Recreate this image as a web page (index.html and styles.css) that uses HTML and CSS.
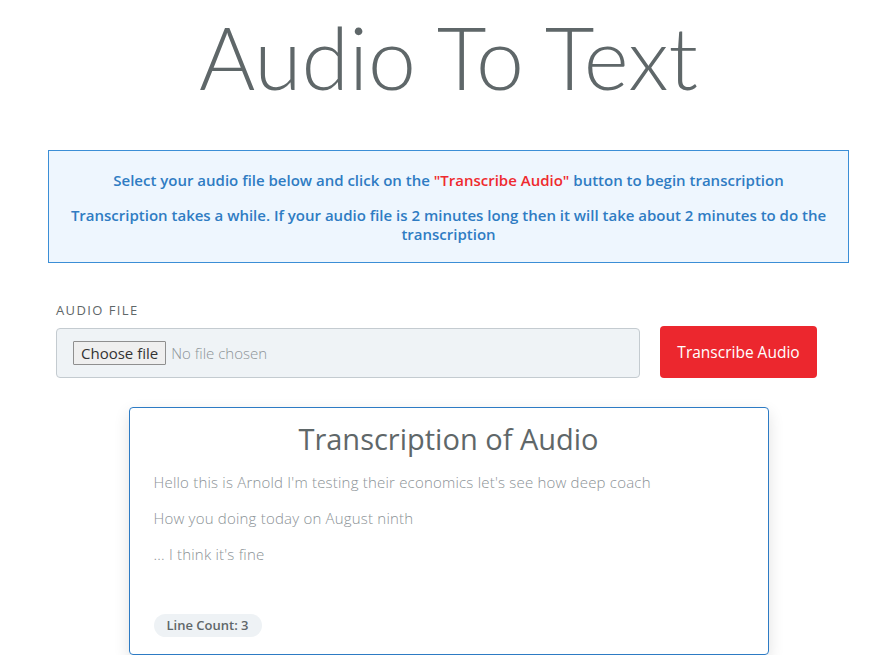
FILE: index.html
```html
<!DOCTYPE html>
<html>
<head>
<meta charset="utf-8">
<link rel="stylesheet" href="styles.css">
</head>
<body>
<div class="page">
  <h1 class="title">Audio To Text</h1>
  <div class="info">
    <p>Select your audio file below and click on the <span class="hl">"Transcribe Audio"</span> button to begin transcription</p>
    <p>Transcription takes a while. If your audio file is 2 minutes long then it will take about 2 minutes to do the transcription</p>
  </div>
  <div class="form">
    <div class="field">
      <label class="label">AUDIO FILE</label>
      <div class="filebox">
        <span class="choose">Choose file</span>
        <span class="nofile">No file chosen</span>
      </div>
    </div>
    <button class="btn">Transcribe Audio</button>
  </div>
  <div class="card">
    <h2 class="card-title">Transcription of Audio</h2>
    <p class="line">Hello this is Arnold I'm testing their economics let's see how deep coach</p>
    <p class="line">How you doing today on August ninth</p>
    <p class="line">... I think it's fine</p>
    <span class="badge">Line Count: 3</span>
  </div>
</div>
</body>
</html>
```
FILE: styles.css
```css
* { box-sizing: border-box; }
html, body { margin: 0; padding: 0; background: #fff; }
body { font-family: "Open Sans", Lato, sans-serif; color: #5f6769; }
.page { width: 801px; margin: 0 0 0 48px; padding-top: 7px; }
.title {
  margin: 0;
  text-align: center;
  font-family: Lato, sans-serif;
  font-weight: 300;
  font-size: 86px;
  line-height: 100px;
  color: #5f6769;
}
.info {
  margin-top: 43px;
  border: 1px solid #3b8ed6;
  background: #eef6fe;
  color: #2f7cc3;
  text-align: center;
  font-size: 15px;
  font-weight: 600;
  line-height: 19px;
  padding: 20px 20px 18px;
  height: 113px;
}
.info p { margin: 0 0 16px; }
.info p:last-child { margin-bottom: 0; }
.hl { color: #ee2a2f; }
.form {
  display: flex;
  align-items: flex-end;
  gap: 20px;
  padding: 0 8px;
  margin-top: 39px;
}
.field { width: 584px; }
.label {
  display: block;
  font-size: 13px;
  letter-spacing: 1.4px;
  line-height: 16px;
  margin-bottom: 10px;
  color: #5f6769;
}
.filebox {
  height: 50px;
  background: #eff3f6;
  border: 1px solid #c4cbd0;
  border-radius: 4px;
  display: flex;
  align-items: center;
  padding-left: 16px;
}
.choose {
  height: 24px;
  border: 1px solid #8f8f8f;
  background: #efefef;
  font-size: 15px;
  line-height: 22px;
  padding: 0 7px;
  color: #333;
  border-radius: 1px;
}
.nofile { margin-left: 5px; font-size: 15px; color: #8d9498; font-weight: 300; }
.btn {
  width: 157px;
  height: 52px;
  background: #ec272e;
  border: none;
  border-radius: 4px;
  color: #fff;
  font-family: inherit;
  font-size: 15.5px;
}
.card {
  width: 640px;
  margin: 29px auto 0;
  border: 1px solid #2d7bc4;
  border-radius: 4px;
  box-shadow: 0 6px 16px rgba(0,0,0,0.12);
  padding: 13px 24px 17px;
  height: 248px;
  display: flex;
  flex-direction: column;
  align-items: flex-start;
}
.card-title {
  align-self: stretch;
  text-align: center;
  margin: 0 0 15px;
  font-weight: 400;
  font-size: 29px;
  line-height: 36px;
  color: #5f6769;
}
.line {
  margin: 0 0 16px;
  font-size: 15px;
  font-weight: 300;
  letter-spacing: 0.2px;
  line-height: 20px;
  color: #8b9296;
}
.badge {
  margin-top: auto;
  background: #eef2f5;
  border-radius: 12px;
  font-size: 13px;
  font-weight: 600;
  line-height: 23px;
  padding: 0 13px;
  color: #5f6769;
}
```
